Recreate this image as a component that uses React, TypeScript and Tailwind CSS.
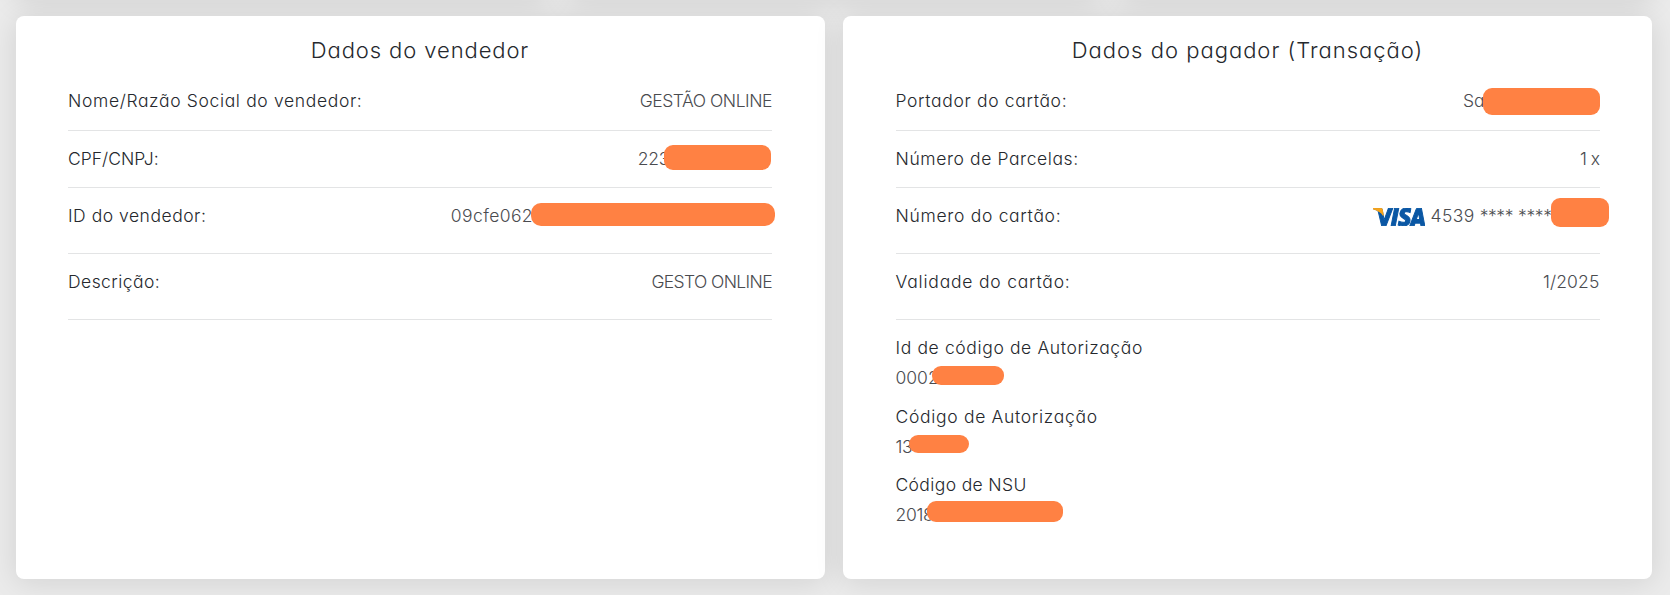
import type { ReactNode } from "react";

function Mask({ className }: { className: string }) {
  return <span aria-hidden="true" className={`absolute bg-[#ff8143] ${className}`} />;
}

function VisaLogo() {
  return (
    <svg
      role="img"
      aria-label="Visa"
      viewBox="-0.1 8.14 24.2 7.74"
      preserveAspectRatio="none"
      className="mr-[6px] mt-[6px] h-[18px] w-[52px]"
    >
      <path
        fill="#0a57a4"
        stroke="#0a57a4"
        strokeWidth="0.45"
        d="M9.112 8.262L5.97 15.758H3.92L2.374 9.775c-.094-.368-.175-.503-.461-.658C1.447 8.864.677 8.627 0 8.479l.046-.217h3.3a.904.904 0 01.894.764l.817 4.338 2.018-5.102zm8.033 5.049c.008-1.979-2.736-2.088-2.717-2.972.006-.269.262-.555.822-.628a3.66 3.66 0 011.913.336l.34-1.59a5.207 5.207 0 00-1.814-.333c-1.917 0-3.266 1.02-3.278 2.479-.012 1.079.963 1.68 1.698 2.04.756.367 1.01.603 1.006.931-.005.504-.602.725-1.16.734-.975.015-1.54-.263-1.992-.473l-.351 1.642c.453.208 1.289.39 2.156.398 2.037 0 3.37-1.006 3.377-2.564m5.061 2.447H24l-1.565-7.496h-1.656a.883.883 0 00-.826.55l-2.909 6.946h2.036l.405-1.12h2.488zm-2.163-2.656l1.02-2.815.588 2.815zm-8.16-4.84l-1.603 7.496H8.34l1.605-7.496z"
      />
      <path
        fill="#f9a51a"
        stroke="#f9a51a"
        strokeWidth="0.45"
        d="M0 8.479l.046-.217h3.3a.904.904 0 01.894.764l.45 2.3C4 10.3 2.7 9.2 0 8.479z"
      />
    </svg>
  );
}

function Row({ label, tracking, height, children }: { label: string; tracking: string; height: string; children: ReactNode }) {
  return (
    <div className={`flex items-start justify-between border-b border-[#e3e4e5] pt-[14px] ${height}`}>
      <span className={tracking}>{label}</span>
      <span className="relative flex text-[#4a4b4f]">{children}</span>
    </div>
  );
}

function Card({ title, tracking, padding, children }: { title: string; tracking: string; padding: string; children: ReactNode }) {
  return (
    <section className={`h-[563px] flex-1 rounded-lg bg-white shadow-[0_3px_30px_rgba(0,0,0,0.11)] ${padding}`}>
      <h2 className={`flex h-[57px] items-end justify-center pb-[7px] text-[22px] leading-[32px] font-light ${tracking}`}>{title}</h2>
      {children}
    </section>
  );
}

function Code({ label, tracking, height, value, valueTracking, mask }: { label: string; tracking: string; height: string; value: string; valueTracking: string; mask: string }) {
  return (
    <div className={height}>
      <div className={tracking}>{label}</div>
      <div className={`relative mt-[3px] text-[#4a4b4f] ${valueTracking}`}>
        {value}
        <Mask className={mask} />
      </div>
    </div>
  );
}

export default function App() {
  return (
    <main className="h-[595px] overflow-hidden bg-[#ebebeb] px-4 font-['Inter','Open_Sans',sans-serif] text-[17.5px] leading-[27px] font-light text-[#25282d] [font-feature-settings:'cv11']">
      <div className="-mt-[202px] flex h-[200px] gap-[18px] pr-[2px]">
        <div className="flex-1 rounded-lg bg-white shadow-[0_3px_30px_rgba(0,0,0,0.11)]" />
        <div className="flex-1 rounded-lg bg-white shadow-[0_3px_30px_rgba(0,0,0,0.11)]" />
        <div className="flex-1 rounded-lg bg-white shadow-[0_3px_30px_rgba(0,0,0,0.11)]" />
      </div>

      <div className="mt-[18px] flex gap-[18px] pr-[2px]">
        <Card title="Dados do vendedor" tracking="tracking-[0.9px]" padding="pr-[53px] pl-[52px]">
          <Row label="Nome/Razão Social do vendedor:" tracking="tracking-[0.65px]" height="h-[58px]">
            <span className="tracking-[-0.46px]">GESTÃO ONLINE</span>
          </Row>
          <Row label="CPF/CNPJ:" tracking="tracking-[0.05px]" height="h-[57px]">
            <span className="mr-[103px] tracking-[-0.3px]">223</span>
            <Mask className="top-0 right-[1px] h-[25px] w-[107px] rounded-[9px]" />
          </Row>
          <Row label="ID do vendedor:" tracking="tracking-[0.52px]" height="h-[66px]">
            <span className="mr-[239px] tracking-[0.4px]">09cfe062</span>
            <Mask className="top-[1px] -right-[3px] h-[23px] w-[244px] rounded-[10px]" />
          </Row>
          <Row label="Descrição:" tracking="tracking-[0.45px]" height="h-[66px]">
            <span className="tracking-[-0.62px]">GESTO ONLINE</span>
          </Row>
        </Card>

        <Card title="Dados do pagador (Transação)" tracking="tracking-[1px]" padding="px-[52.5px]">
          <Row label="Portador do cartão:" tracking="tracking-[0.66px]" height="h-[58px]">
            <span className="mr-[115px]">Sa</span>
            <Mask className="top-[1px] right-0 h-[27px] w-[117px] rounded-[9px]" />
          </Row>
          <Row label="Número de Parcelas:" tracking="tracking-[0.6px]" height="h-[57px]">
            <span className="tracking-[-0.5px]">1 x</span>
          </Row>
          <Row label="Número do cartão:" tracking="tracking-[0.7px]" height="h-[66px]">
            <VisaLogo />
            <span className="mr-[5px] tracking-[0.4px]">4539</span>
            <span className="mr-[5px] tracking-[-0.4px]">****</span>
            <span className="mr-[48px] tracking-[-0.4px]">****</span>
            <Mask className="-top-[4px] -right-[9px] h-[29px] w-[58px] rounded-[9px]" />
          </Row>
          <Row label="Validade do cartão:" tracking="tracking-[0.8px]" height="h-[66px]">
            <span className="tracking-[0.15px]">1/2025</span>
          </Row>
          <div className="pt-[14px]">
            <Code
              label="Id de código de Autorização"
              tracking="tracking-[0.63px]"
              height="h-[69px]"
              value="0002"
              valueTracking="tracking-[0px]"
              mask="left-[36px] top-[2px] h-[19px] w-[72px] rounded-[9px]"
            />
            <Code
              label="Código de Autorização"
              tracking="tracking-[0.69px]"
              height="h-[68px]"
              value="13"
              valueTracking="tracking-[-0.4px]"
              mask="left-[13px] top-[2px] h-[18px] w-[60px] rounded-[9px]"
            />
            <Code
              label="Código de NSU"
              tracking="tracking-[0.37px]"
              height="h-[69px]"
              value="2018"
              valueTracking="tracking-[-0.3px]"
              mask="left-[31px] top-0 h-[21px] w-[136px] rounded-[9px]"
            />
          </div>
        </Card>
      </div>
    </main>
  );
}
